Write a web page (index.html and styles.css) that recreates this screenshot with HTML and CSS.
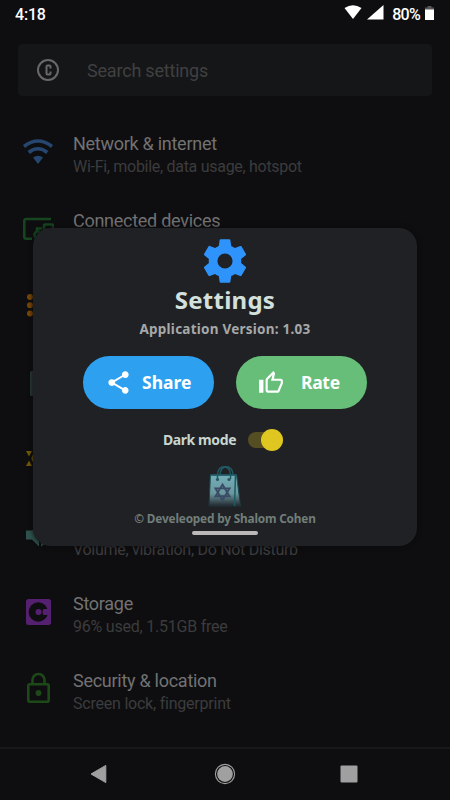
FILE: index.html
```html
<!DOCTYPE html>
<html lang="en">
<head>
<meta charset="utf-8">
<title>Settings</title>
<link rel="stylesheet" href="styles.css">
</head>
<body>
<div class="phone">
  <header class="status">
    <span class="clock">4:18</span>
    <svg class="wifi" width="18" height="15" viewBox="0 0 18 15"><path fill="#fff" d="M.5 3Q9-2.600 17.500 3L9 14z"/></svg>
    <svg class="signal" width="17" height="15" viewBox="0 0 17 15"><path fill="#fff" d="M16.500 0v14.500H0z"/></svg>
    <span class="percent">80%</span>
    <svg class="battery" width="9" height="15" viewBox="0 0 9 15"><path fill="#555" d="M2.500 0h4v1.500H9V4H0V1.500h2.500z"/><path fill="#fff" d="M0 3.500h9V14H0z"/></svg>
  </header>
  <div class="search">
    <svg width="24" height="24" viewBox="0 0 24 24" fill="none" stroke="#686868" stroke-width="2"><circle cx="12" cy="12" r="10"/><path d="M14.500 10.500V8.500q0-1-1-1h-2q-1 0-1 1v7q0 1 1 1h2q1 0 1-1v-2"/></svg>
    <span>Search settings</span>
  </div>
  <main class="list">
    <section class="row">
      <svg class="icon" width="32" height="28" viewBox="0 0 32 28"><g fill="none" stroke="#25466f" stroke-width="3.600"><path d="M2 8.500Q16-2.500 30 8.500"/><path d="M6.700 14.500Q16 7 25.300 14.500"/></g><path fill="#25466f" d="M11 19.500Q16 16 21 19.500L16 26z"/></svg>
      <div><h2>Network &amp; internet</h2><p>Wi-Fi, mobile, data usage, hotspot</p></div>
    </section>
    <section class="row">
      <svg class="icon" width="32" height="28" viewBox="0 0 32 28" fill="none" stroke="#15461f" stroke-width="2.600"><path d="M29 4H4.500Q2.300 4 2.300 6v16q0 1.700 2 1.700H10"/><rect x="22" y="9.500" width="9" height="14" rx="1"/><circle cx="16" cy="20" r="3.500"/><path d="M15 16.500v-3h5"/></svg>
      <div><h2>Connected devices</h2><p></p></div>
    </section>
    <section class="row">
      <svg class="icon" width="32" height="28" viewBox="0 0 32 28" fill="#794606"><circle cx="8" cy="6" r="3"/><circle cx="8" cy="14.300" r="3"/><circle cx="8" cy="22.600" r="3"/></svg>
    </section>
    <section class="row">
      <svg class="icon" width="32" height="28" viewBox="0 0 32 28"><rect x="8" y="3" width="15" height="25" rx="1.500" fill="#2a3937"/></svg>
    </section>
    <section class="row">
      <svg class="icon" width="32" height="28" viewBox="0 0 32 28" fill="#715807"><path d="M4 6h6L7 11.500zM4 21h6L7 15.500z"/><circle cx="14" cy="13.500" r="4.500"/></svg>
    </section>
    <section class="row sound">
      <svg class="icon" width="32" height="28" viewBox="0 0 32 28" fill="#2f524d"><path d="M4 9.500h6l7-7v23l-7-7H4zM19 20l5 2.500-5 3z"/></svg>
      <div><h2></h2><p>Volume, vibration, Do Not Disturb</p></div>
    </section>
    <section class="row">
      <svg class="icon" width="32" height="28" viewBox="0 0 32 28"><rect x="4" y="1" width="25" height="26" rx="2.500" fill="#562070"/><circle cx="16.300" cy="14" r="9.700" fill="#0e0e10"/><path fill="#562070" d="M21.500 11h6v6h-6q-2-3 0-6z"/><circle cx="16.500" cy="14" r="3" fill="#562070"/></svg>
      <div><h2>Storage</h2><p class="wide">96% used, 1.51GB free</p></div>
    </section>
    <section class="row">
      <svg class="icon lock" width="32" height="32" viewBox="0 0 32 32" fill="none" stroke="#1d4918" stroke-width="2.600"><rect x="6.300" y="12.300" width="20.400" height="17.400" rx="1.500"/><path d="M10.500 12V8a6 6 0 0 1 12 0v4"/><circle cx="16.500" cy="21" r="2.900" fill="#1d4918" stroke="none"/></svg>
      <div><h2>Security &amp; location</h2><p class="wide">Screen lock, fingerprint</p></div>
    </section>
  </main>
  <nav class="nav">
    <svg width="18" height="20" viewBox="0 0 18 20"><path fill="#a0a0a0" d="M15.800 1.400V18.600L1 10z" stroke="#a0a0a0" stroke-linejoin="round"/></svg>
    <svg width="22" height="22" viewBox="0 0 22 22"><circle cx="11" cy="11" r="9.600" fill="none" stroke="#a0a0a0" stroke-width="1.100"/><circle cx="11" cy="11" r="7.900" fill="#a0a0a0"/></svg>
    <svg width="18" height="18" viewBox="0 0 18 18"><rect x=".5" y=".5" width="17" height="17" rx="1" fill="#a0a0a0"/></svg>
  </nav>

  <div class="dialog">
    <svg class="gear" width="52" height="52" viewBox="0 0 24 24"><path fill="#2e94fc" d="M19.430 12.980c.04-.32.07-.64.07-.98s-.03-.66-.07-.98l2.110-1.650c.19-.15.24-.42.12-.64l-2-3.460c-.12-.22-.39-.3-.61-.22l-2.490 1c-.52-.4-1.080-.73-1.690-.98l-.38-2.650C14.460 2.180 14.250 2 14 2h-4c-.25 0-.46.18-.49.42l-.38 2.650c-.61.25-1.170.59-1.690.98l-2.490-1c-.23-.09-.49 0-.61.22l-2 3.460c-.13.22-.07.49.12.64l2.110 1.650c-.04.32-.07.65-.07.98s.03.66.07.98l-2.110 1.650c-.19.15-.24.42-.12.64l2 3.460c.12.22.39.3.61.22l2.490-1c.52.4 1.080.73 1.690.98l.38 2.650c.03.24.24.42.49.42h4c.25 0 .46-.18.49-.42l.38-2.650c.61-.25 1.170-.59 1.690-.98l2.490 1c.23.09.49 0 .61-.22l2-3.460c.12-.22.07-.49-.12-.64l-2.110-1.650zM12 15.500a3.500 3.500 0 1 1 0-7 3.500 3.500 0 0 1 0 7z"/></svg>
    <h1>Settings</h1>
    <p class="version">Application Version: 1.03</p>
    <div class="buttons">
      <button class="btn share"><svg width="27" height="27" viewBox="0 0 24 24"><path fill="#fff" d="M18 16.080c-.76 0-1.440.3-1.960.77L8.910 12.700c.05-.23.09-.46.09-.7s-.04-.47-.09-.7l7.050-4.110c.54.5 1.250.81 2.040.81 1.660 0 3-1.340 3-3s-1.340-3-3-3-3 1.340-3 3c0 .24.04.47.09.7L8.040 9.810C7.500 9.310 6.790 9 6 9c-1.660 0-3 1.340-3 3s1.340 3 3 3c.79 0 1.500-.31 2.040-.81l7.120 4.160c-.05.21-.08.43-.08.65 0 1.610 1.310 2.920 2.920 2.920s2.920-1.310 2.920-2.920-1.310-2.920-2.920-2.920z"/></svg><span>Share</span></button>
      <button class="btn rate"><svg width="26" height="26" viewBox="0 0 24 24"><path fill="#fff" d="M9 21h9c.83 0 1.540-.5 1.840-1.220l3.020-7.050c.09-.23.14-.47.14-.73v-2c0-1.100-.9-2-2-2h-6.310l.95-4.570.03-.32c0-.41-.17-.79-.44-1.060L14.170 1 7.580 7.590C7.220 7.950 7 8.450 7 9v10c0 1.100.9 2 2 2zM9 9l4.340-4.340L12 10h9v2l-3 7H9V9zM1 9h4v12H1z"/></svg><span>Rate</span></button>
    </div>
    <div class="mode"><span class="label">Dark mode</span><span class="switch"><span class="thumb"></span></span></div>
    <svg class="bag" width="36" height="42" viewBox="0 0 36 42">
      <defs><linearGradient id="paper" x1="0" y1="0" x2="0" y2="1"><stop offset="0" stop-color="#74aeb7"/><stop offset=".6" stop-color="#6a979e"/><stop offset="1" stop-color="#22292f"/></linearGradient><linearGradient id="edge" x1="0" y1="0" x2="0" y2="1"><stop offset="0" stop-color="#1f5a64"/><stop offset="1" stop-color="#1f343b"/></linearGradient></defs>
      <path fill="url(#paper)" stroke="url(#edge)" d="M3.500 10h26l4 31H2z"/><path fill="none" stroke="#1f5a64" stroke-width="1.500" d="M28.500 10l-1 31M3.500 10h26M10.500 14V10c0-11 13-11 13 0v4M13 10c0-11 13-11 13 0"/>
      <g fill="#245761"><circle cx="10.500" cy="14.500" r="1.600"/><circle cx="22" cy="14.500" r="1.600"/></g>
      <path fill="none" stroke="#3a4b65" stroke-width="1.900" d="M15.500 19.500l7 11.800h-14zM15.500 35.200l-7-11.800h14z"/>
    </svg>
    <p class="credit">© Develeoped by Shalom Cohen</p>
    <div class="handle"></div>
  </div>
</div>
</body>
</html>
```

FILE: styles.css
```css
* { box-sizing: border-box; }
body { margin: 0; background: #0e0e10; font-family: Roboto, sans-serif; }
h1, h2, p { margin: 0; }
svg { display: block; flex: none; }
.phone { position: relative; width: 450px; height: 800px; overflow: hidden; display: flex; flex-direction: column; }
.status { height: 44px; display: flex; align-items: flex-start; padding: 5px 16px 0 15px; color: #fff; font-size: 16px; line-height: 19px; font-weight: 500; }
.clock { margin-right: auto; letter-spacing: -.2px; }
.wifi { margin-right: 5px; }
.signal { margin-right: 8px; }
.percent { margin-right: 5px; letter-spacing: -.7px; }
.battery { margin-top: 1px; }
.search { height: 52px; margin: 0 18px; padding-left: 18px; border-radius: 4px; background: #151618; display: flex; align-items: center; gap: 27px; color: #404041; font-size: 18px; letter-spacing: -.2px; }
.list { margin-top: 21px; height: 629.5px; flex: none; }
.row { height: 76.7px; padding: 15px 0 0 22px; display: flex; align-items: flex-start; gap: 19px; }
.icon { margin-top: 6px; }
.lock { margin-top: 3px; }
.row h2 { height: 23px; font-size: 18px; line-height: 24px; font-weight: 400; letter-spacing: -.27px; color: #727273; }
.row p { height: 22px; font-size: 16px; line-height: 24px; letter-spacing: -.29px; color: #3c3c3d; }
.row .wide { letter-spacing: -.22px; }
.nav { flex: 1; border-top: 2px solid #19191b; display: flex; align-items: center; justify-content: space-between; padding: 0 92px 1px 90px; }
.nav svg:nth-child(2) { margin-left: 1px; }
.dialog { position: absolute; left: 33px; top: 228px; width: 384px; height: 318px; border-radius: 18px; background: #202125; display: flex; flex-direction: column; align-items: center; padding-top: 7px; font-family: "Noto Sans", sans-serif; font-weight: 700; box-shadow: 0 0 5px #0a0a0c; }
.dialog h1 { font-size: 24px; line-height: 28px; margin-top: -1px; color: #d4e0dc; letter-spacing: .25px; }
.version { font-size: 13.500px; line-height: 18px; margin-top: 6px; color: #a6a8a8; letter-spacing: .24px; }
.buttons { display: flex; gap: 22px; margin-top: 18px; }
.btn { width: 131px; height: 53px; border: 0; border-radius: 27px; display: flex; align-items: center; color: #fff; font: 700 17.500px "Noto Sans", sans-serif; letter-spacing: 0; }
.btn span { position: relative; top: -1px; }
.share { background: #2da1f0; padding: 0 0 0 22px; gap: 10px; }
.rate { background: #66be78; padding: 0 0 0 22px; gap: 17px; letter-spacing: -.3px; }
.mode { height: 22px; margin-top: 20px; display: flex; align-items: center; gap: 12px; color: #c8d6d0; font-size: 14px; letter-spacing: -.4px; margin-right: 4px; }
.label { position: relative; top: -1px; }
.switch { width: 35px; height: 16px; border-radius: 8px; background: #554e22; display: flex; align-items: center; justify-content: flex-end; }
.thumb { width: 22px; height: 22px; flex: none; border-radius: 50%; background: #dfc620; }
.bag { margin-top: 14px; }
.credit { font-size: 11.800px; line-height: 17px; margin-top: 3px; color: #717e79; letter-spacing: -.17px; }
.handle { width: 66px; height: 4px; margin-top: 4px; border-radius: 2px; background: #bdb9b8; }
```
